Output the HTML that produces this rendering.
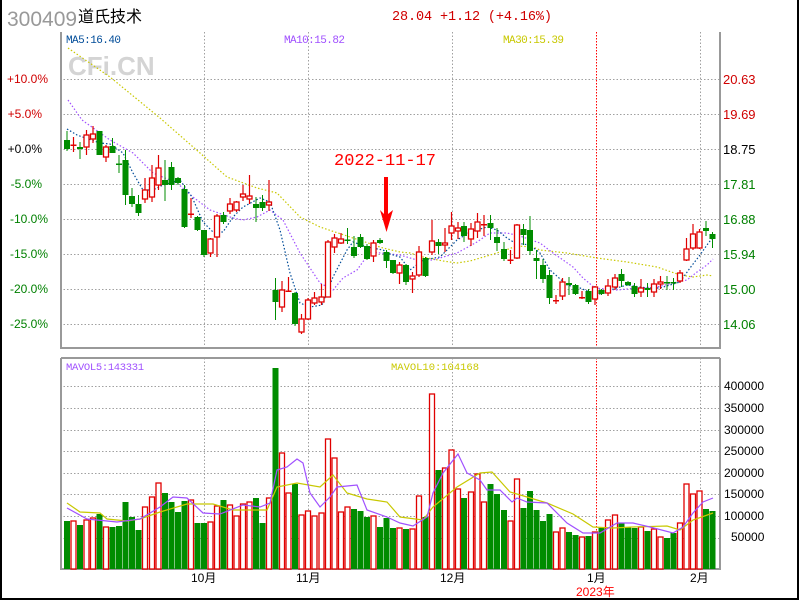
<!DOCTYPE html>
<html><head><meta charset="utf-8"><style>
html,body{margin:0;padding:0;background:#fff;}
svg{display:block;}
text{font-family:"Liberation Sans","Noto Sans CJK SC",sans-serif;}
.m{font-family:"Liberation Mono","Noto Sans CJK SC",monospace;}
</style></head><body>
<svg width="800" height="600" viewBox="0 0 800 600" xmlns="http://www.w3.org/2000/svg">
<rect width="800" height="600" fill="#fff"/>
<!-- outer frame -->
<path d="M1 0V599H798V0" fill="none" stroke="#000" stroke-width="2"/>
<!-- header -->
<text x="7" y="26" font-size="21" fill="#999">300409</text>
<text x="78" y="22" font-size="16" fill="#000">道氏技术</text>
<text x="392" y="20" class="m" font-size="13.5" fill="#d00000" textLength="160">28.04 +1.12 (+4.16%)</text>

<!-- grids -->
<g stroke="#a0a0a0" stroke-width="1" stroke-dasharray="1.5 2" fill="none">
<path d="M60 79.5H720M60 114.5H720M60 149.5H720M60 184.5H720M60 219.5H720M60 254.5H720M60 289.5H720M60 324.5H720"/>
<path d="M204.5 32V348M308.5 32V348M452.5 32V348M700.5 32V348"/>
<path d="M60 386.5H720M60 408.5H720M60 430.5H720M60 451.5H720M60 473.5H720M60 494.5H720M60 516.5H720M60 538.5H720"/>
<path d="M204.5 358V569M308.5 358V569M452.5 358V569M700.5 358V569"/>
</g>
<path d="M596.5 32V348M596.5 358V569" stroke="#ff0000" stroke-width="1" stroke-dasharray="1.5 1.5"/>

<!-- panel borders -->
<path d="M61 32V348H720V32" fill="none" stroke="#999" stroke-width="2"/>
<path d="M61 358H720M61 358V569H720V358" fill="none" stroke="#999" stroke-width="2"/>

<!-- watermark -->
<text x="68" y="75" font-size="26" font-weight="bold" fill="#d4d4d4">CFi.CN</text>

<!-- MA labels -->
<text x="66" y="43" class="m" font-size="11" fill="#004c99" textLength="55">MA5:16.40</text>
<text x="284" y="43" class="m" font-size="11" fill="#a050ff" textLength="61">MA10:15.82</text>
<text x="503" y="43" class="m" font-size="11" fill="#c8c800" textLength="61">MA30:15.39</text>

<!-- left pct labels -->
<g font-size="12" class="m" text-anchor="end">
<text x="48" y="83" fill="#d00000">+10.0%</text>
<text x="42" y="118" fill="#d00000">+5.0%</text>
<text x="42" y="153" fill="#000">+0.0%</text>
<text x="42" y="188" fill="#008000">-5.0%</text>
<text x="48" y="223" fill="#008000">-10.0%</text>
<text x="48" y="258" fill="#008000">-15.0%</text>
<text x="48" y="293" fill="#008000">-20.0%</text>
<text x="48" y="328" fill="#008000">-25.0%</text>
</g>
<g font-size="13" class="m">
<text x="723" y="84" fill="#d00000">20.63</text>
<text x="723" y="119" fill="#d00000">19.69</text>
<text x="723" y="154" fill="#000">18.75</text>
<text x="723" y="189" fill="#008000">17.81</text>
<text x="723" y="224" fill="#008000">16.88</text>
<text x="723" y="259" fill="#008000">15.94</text>
<text x="723" y="294" fill="#008000">15.00</text>
<text x="723" y="329" fill="#008000">14.06</text>
</g>
<g font-size="12" fill="#000">
<text x="724" y="390">400000</text>
<text x="724" y="412">350000</text>
<text x="724" y="434">300000</text>
<text x="724" y="455">250000</text>
<text x="724" y="477">200000</text>
<text x="724" y="498">150000</text>
<text x="724" y="520">100000</text>
<text x="731" y="541">50000</text>
</g>

<!-- vol labels -->
<text x="66" y="370" class="m" font-size="10.5" fill="#a050ff" textLength="78">MAVOL5:143331</text>
<text x="391" y="370" class="m" font-size="10.5" fill="#c8c800" textLength="88">MAVOL10:104168</text>

<!-- month labels -->
<g font-size="12" fill="#000">
<text x="191" y="582">10月</text>
<text x="296" y="582">11月</text>
<text x="440" y="582">12月</text>
<text x="587" y="582">1月</text>
<text x="690" y="582">2月</text>
</g>
<text x="576" y="596" font-size="12" fill="#ff0000">2023年</text>

<!-- annotation -->
<text x="334" y="165" class="m" font-size="17" fill="#ff0000" textLength="102">2022-11-17</text>
<path d="M384 177H388V214L393 210L386.5 232L380 210L384 214Z" fill="#ff0000"/>

<!-- MA lines price -->
<polyline fill="none" stroke="#c8c800" stroke-width="1.2" stroke-dasharray="1.5 2" points="68,48 110,77 160,118 200,153 227,177 257,188 277,193 300,217 320,227 350,237 383,248 400,252 410,253 423,257 443,261 457,263 470,261 487,256 500,252 517,246 533,247 540,250 567,253 597,258 627,262 657,267 680,275 693,277 707,275 713,276"/>
<polyline fill="none" stroke="#a050ff" stroke-width="1.2" stroke-dasharray="1.5 2" points="68,100 82,120 110,140 133,153 153,173 177,183 193,197 210,210 233,218 243,220 257,217 270,210 283,220 300,253 320,283 333,290 343,278 357,270 370,252 400,255 417,260 433,260 457,253 477,242 490,233 507,233 520,236 537,242 540,243 553,253 573,267 583,278 595,288 617,290 637,288 657,287 673,283 687,280 697,272 707,265 713,259"/>
<polyline fill="none" stroke="#004c99" stroke-width="1.2" stroke-dasharray="1.5 2" points="67,129 77,135 100,143 110,144 123,153 133,173 143,190 153,190 163,185 180,180 192,197 203,222 213,232 223,232 233,217 243,207 260,198 270,202 280,230 290,273 300,303 310,307 322,305 333,277 347,250 353,242 367,247 383,250 390,254 400,257 410,270 423,260 440,257 457,240 470,232 487,227 497,230 507,238 515,243 530,245 540,253 550,270 567,285 580,288 597,295 610,290 627,285 647,288 660,288 670,285 680,282 690,268 700,255 707,245 713,237"/>

<!-- green candles -->
<path stroke="#008c00" stroke-width="1" fill="none" d="M67 131V151M80 142V159M99.5 131V155M112.5 138V153M119 155V173M125.5 150V205M132 188V207M138.5 195V216M165 160V201M171.5 162V190M178 177V185M184.5 185V228M197.5 216V231M204 230V257M223.5 212V224M256 197V222M262.5 195V211M275.5 278V320M295 292V326M347.5 228V244M354 236V258M360.5 234V248M367 244V260M380 238V244M386.5 250V268M393 260V274M406 264V285M425.5 257V277M438.5 239V254M464 222V242M490.5 215V240M497 228V251M504 242V261M523.5 224V245M530 216V255M536.5 250V279M543 259V283M549.5 270V304M569 277V295M575.5 284V295M588.5 289V304M601.5 289V295M621.5 269V287M628 281V286M634.5 283V297M647.5 283V297M667 276V290M673.5 278V290M706 221V236M712.5 232V248"/>
<g fill="#008c00">
<rect x="64" y="140" width="6" height="9"/><rect x="77" y="147" width="6" height="2"/><rect x="96.5" y="131" width="6" height="24"/><rect x="109.5" y="146" width="6" height="7"/><rect x="116" y="163.5" width="6" height="1.5"/><rect x="122.5" y="160" width="6" height="35"/><rect x="129" y="196" width="6" height="8"/><rect x="135.5" y="204" width="6" height="9"/><rect x="162" y="180" width="6" height="5"/><rect x="168.5" y="167" width="6" height="18"/><rect x="175" y="178" width="6" height="5"/><rect x="181.5" y="189" width="6" height="38"/><rect x="194.5" y="217" width="6" height="13"/><rect x="201" y="230" width="6" height="25"/><rect x="220.5" y="215" width="6" height="7"/><rect x="253" y="204" width="6" height="4"/><rect x="259.5" y="202" width="6" height="6"/><rect x="272.5" y="290" width="6" height="12"/><rect x="292" y="293" width="6" height="31"/><rect x="344.5" y="239.5" width="6" height="1.5"/><rect x="351" y="247" width="6" height="9"/><rect x="357.5" y="237" width="6" height="10"/><rect x="364" y="246" width="6" height="13"/><rect x="377" y="240" width="6" height="3"/><rect x="383.5" y="252" width="6" height="9"/><rect x="390" y="260" width="6" height="13"/><rect x="403" y="265" width="6" height="17"/><rect x="422.5" y="258" width="6" height="18"/><rect x="435.5" y="242" width="6" height="4"/><rect x="461" y="226" width="6" height="10"/><rect x="487.5" y="223" width="6" height="5"/><rect x="494" y="237" width="6" height="6"/><rect x="501" y="249" width="6" height="10"/><rect x="520.5" y="229" width="6" height="6"/><rect x="527" y="230" width="6" height="21"/><rect x="533.5" y="258" width="6" height="3"/><rect x="540" y="265" width="6" height="14"/><rect x="546.5" y="275" width="6" height="23"/><rect x="566" y="283" width="6" height="2"/><rect x="572.5" y="285" width="6" height="9"/><rect x="585.5" y="291" width="6" height="11"/><rect x="598.5" y="290" width="6" height="4"/><rect x="618.5" y="274" width="6" height="7"/><rect x="625" y="282" width="6" height="3"/><rect x="631.5" y="286" width="6" height="8"/><rect x="644.5" y="288" width="6" height="2"/><rect x="664" y="282" width="6" height="1.5"/><rect x="670.5" y="282" width="6" height="1.5"/><rect x="703" y="228" width="6" height="3"/><rect x="709.5" y="234" width="6" height="5"/>
</g>
<!-- red candles -->
<path stroke="#e00000" stroke-width="1.2" fill="none" d="M73.5 137V152M86.5 130V155M93 126V143M106 145V162M145 178V203M152 165V202M158.5 155V190M191 198V218M210.5 238V257M217 214V257M230 198V214M236.5 201V212M243 185V201M249.5 175V204M269 180V211M282 281V312M288.5 277V291M301.5 314V334M308 298V320M314.5 292V305M321.5 284V305M328 240V297M334.5 234V253M341 233V244M373.5 240V262M399.5 262V284M412.5 272V293M419 246V277M432 220V255M445 228V252M451.5 212V240M458 222V239M471 223V246M477.5 213V238M484 215V236M510.5 250V264M517 224V259M556 295V304M562.5 278V300M582 291V299M595 286V305M608 279V296M615 274V290M641 279V297M654 279V297M660.5 276V289M680 270V283M686.5 238V261M693 224V250M699.5 229V249"/>
<g fill="#e00000">
<rect x="70.5" y="144.5" width="6" height="1.5"/><rect x="188" y="213.5" width="6" height="1.5"/><rect x="285.5" y="290.5" width="6" height="1.5"/><rect x="481" y="224" width="6" height="1.5"/><rect x="507.5" y="259.5" width="6" height="1.5"/><rect x="553" y="300" width="6" height="1.5"/><rect x="579" y="297" width="6" height="1.5"/>
</g>
<g fill="#fff" stroke="#e00000" stroke-width="1.3">
<rect x="84" y="135" width="5" height="12"/><rect x="90.5" y="134" width="5" height="5"/><rect x="103.5" y="147" width="5" height="10"/><rect x="142.5" y="190" width="5" height="9"/><rect x="149.5" y="178" width="5" height="19"/><rect x="156" y="168" width="5" height="17"/><rect x="208" y="239" width="5" height="14"/><rect x="214.5" y="216" width="5" height="21"/><rect x="227.5" y="204" width="5" height="7"/><rect x="234" y="202" width="5" height="8"/><rect x="240.5" y="194" width="5" height="3"/><rect x="247" y="196" width="5" height="3"/><rect x="266.5" y="202" width="5" height="3"/><rect x="279.5" y="290" width="5" height="17"/><rect x="299" y="319" width="5" height="13"/><rect x="305.5" y="300" width="5" height="19"/><rect x="312" y="298" width="5" height="5"/><rect x="319" y="297" width="5" height="5"/><rect x="325.5" y="242" width="5" height="55"/><rect x="332" y="238" width="5" height="9"/><rect x="338.5" y="239" width="5" height="4"/><rect x="371" y="243" width="5" height="13"/><rect x="397" y="265" width="5" height="8"/><rect x="410" y="276" width="5" height="3"/><rect x="416.5" y="252" width="5" height="23"/><rect x="429.5" y="241" width="5" height="11"/><rect x="442.5" y="243" width="5" height="2"/><rect x="449" y="226" width="5" height="7"/><rect x="455.5" y="228" width="5" height="3"/><rect x="468.5" y="229" width="5" height="10"/><rect x="475" y="222" width="5" height="9"/><rect x="514.5" y="225" width="5" height="33"/><rect x="560" y="282" width="5" height="14"/><rect x="592.5" y="287" width="5" height="12"/><rect x="605.5" y="286" width="5" height="7"/><rect x="612.5" y="278" width="5" height="9"/><rect x="638.5" y="288" width="5" height="4"/><rect x="651.5" y="284" width="5" height="8"/><rect x="658" y="282" width="5" height="2"/><rect x="677.5" y="273" width="5" height="8"/><rect x="684" y="249" width="5" height="11"/><rect x="690.5" y="234" width="5" height="14"/><rect x="697" y="232" width="5" height="16"/>
</g>

<!-- volume green -->
<path fill="#008c00" d="M64 521h6V569h-6zM77 525h6V569h-6zM96.5 514h6V569h-6zM109.5 527h6V569h-6zM116 526h6V569h-6zM122.5 502h6V569h-6zM129 517h6V569h-6zM135.5 530h6V569h-6zM162 493h6V569h-6zM168.5 502h6V569h-6zM175 512h6V569h-6zM181.5 501h6V569h-6zM194.5 523h6V569h-6zM201 523h6V569h-6zM220.5 500h6V569h-6zM253 498h6V569h-6zM259.5 523h6V569h-6zM272.5 368h6V569h-6zM292 484h6V569h-6zM351 509h6V569h-6zM357.5 511h6V569h-6zM364 517h6V569h-6zM377 527h6V569h-6zM383.5 518h6V569h-6zM390 528h6V569h-6zM403 529h6V569h-6zM422.5 517h6V569h-6zM435.5 470h6V569h-6zM461 498h6V569h-6zM487.5 484h6V569h-6zM494 494h6V569h-6zM501 510h6V569h-6zM520.5 508h6V569h-6zM527 491h6V569h-6zM533.5 510h6V569h-6zM540 521h6V569h-6zM546.5 514h6V569h-6zM566 532h6V569h-6zM572.5 535h6V569h-6zM585.5 536h6V569h-6zM598.5 528h6V569h-6zM618.5 523h6V569h-6zM625 527h6V569h-6zM631.5 528h6V569h-6zM644.5 531h6V569h-6zM664 538h6V569h-6zM670.5 533h6V569h-6zM703 509h6V569h-6zM709.5 511h6V569h-6z"/>
<!-- volume red -->
<g fill="#fff" stroke="#e00000" stroke-width="1.3">
<rect x="71" y="521" width="5" height="48"/><rect x="84" y="520" width="5" height="49"/><rect x="90.5" y="518" width="5" height="51"/><rect x="103.5" y="527" width="5" height="42"/><rect x="142.5" y="507" width="5" height="62"/><rect x="149.5" y="497" width="5" height="72"/><rect x="156" y="483" width="5" height="86"/><rect x="188.5" y="500" width="5" height="69"/><rect x="208" y="522" width="5" height="47"/><rect x="214.5" y="506" width="5" height="63"/><rect x="227.5" y="505" width="5" height="64"/><rect x="234" y="516" width="5" height="53"/><rect x="240.5" y="504" width="5" height="65"/><rect x="247" y="502" width="5" height="67"/><rect x="266.5" y="498" width="5" height="71"/><rect x="279.5" y="453" width="5" height="116"/><rect x="286" y="493" width="5" height="76"/><rect x="299" y="515" width="5" height="54"/><rect x="305.5" y="511" width="5" height="58"/><rect x="312" y="516" width="5" height="53"/><rect x="319" y="513" width="5" height="56"/><rect x="325.5" y="439" width="5" height="130"/><rect x="332" y="458" width="5" height="111"/><rect x="338.5" y="512" width="5" height="57"/><rect x="345" y="507" width="5" height="62"/><rect x="371" y="516" width="5" height="53"/><rect x="397" y="528" width="5" height="41"/><rect x="410" y="529" width="5" height="40"/><rect x="416.5" y="496" width="5" height="73"/><rect x="429.5" y="394" width="5" height="175"/><rect x="442.5" y="468" width="5" height="101"/><rect x="449" y="450" width="5" height="119"/><rect x="455.5" y="489" width="5" height="80"/><rect x="468.5" y="492" width="5" height="77"/><rect x="475" y="474" width="5" height="95"/><rect x="481.5" y="502" width="5" height="67"/><rect x="508" y="521" width="5" height="48"/><rect x="514.5" y="479" width="5" height="90"/><rect x="553.5" y="532" width="5" height="37"/><rect x="560" y="528" width="5" height="41"/><rect x="579.5" y="537" width="5" height="32"/><rect x="592.5" y="532" width="5" height="37"/><rect x="605.5" y="520" width="5" height="49"/><rect x="612.5" y="515" width="5" height="54"/><rect x="638.5" y="527" width="5" height="42"/><rect x="651.5" y="529" width="5" height="40"/><rect x="658" y="537" width="5" height="32"/><rect x="677.5" y="523" width="5" height="46"/><rect x="684" y="484" width="5" height="85"/><rect x="690.5" y="494" width="5" height="75"/><rect x="697" y="491" width="5" height="78"/>
</g>
<!-- vol MA lines -->
<polyline fill="none" stroke="#c8c800" stroke-width="1.2" points="67,503 80,512 100,513 107,519 127,521 140,519 160,512 187,504 213,504 233,510 267,510 277,487 297,483 320,487 333,475 347,493 367,499 387,502 400,517 423,520 433,507 457,487 480,473 492,472 510,492 527,497 547,503 573,514 593,527 613,528 633,527 667,526 680,530 693,520 713,513"/>
<polyline fill="none" stroke="#a050ff" stroke-width="1.2" points="67,508 87,519 117,522 140,519 160,507 173,497 187,498 203,513 220,514 243,505 260,507 270,503 277,470 287,467 297,459 303,463 310,493 320,507 330,497 337,487 357,485 367,510 387,517 400,523 413,526 427,517 433,493 443,473 458,454 467,473 480,480 487,490 500,490 512,502 517,498 527,502 547,503 567,523 583,533 600,533 617,523 633,523 650,527 673,533 683,527 693,513 703,502 713,498"/>
</svg>
</body></html>
